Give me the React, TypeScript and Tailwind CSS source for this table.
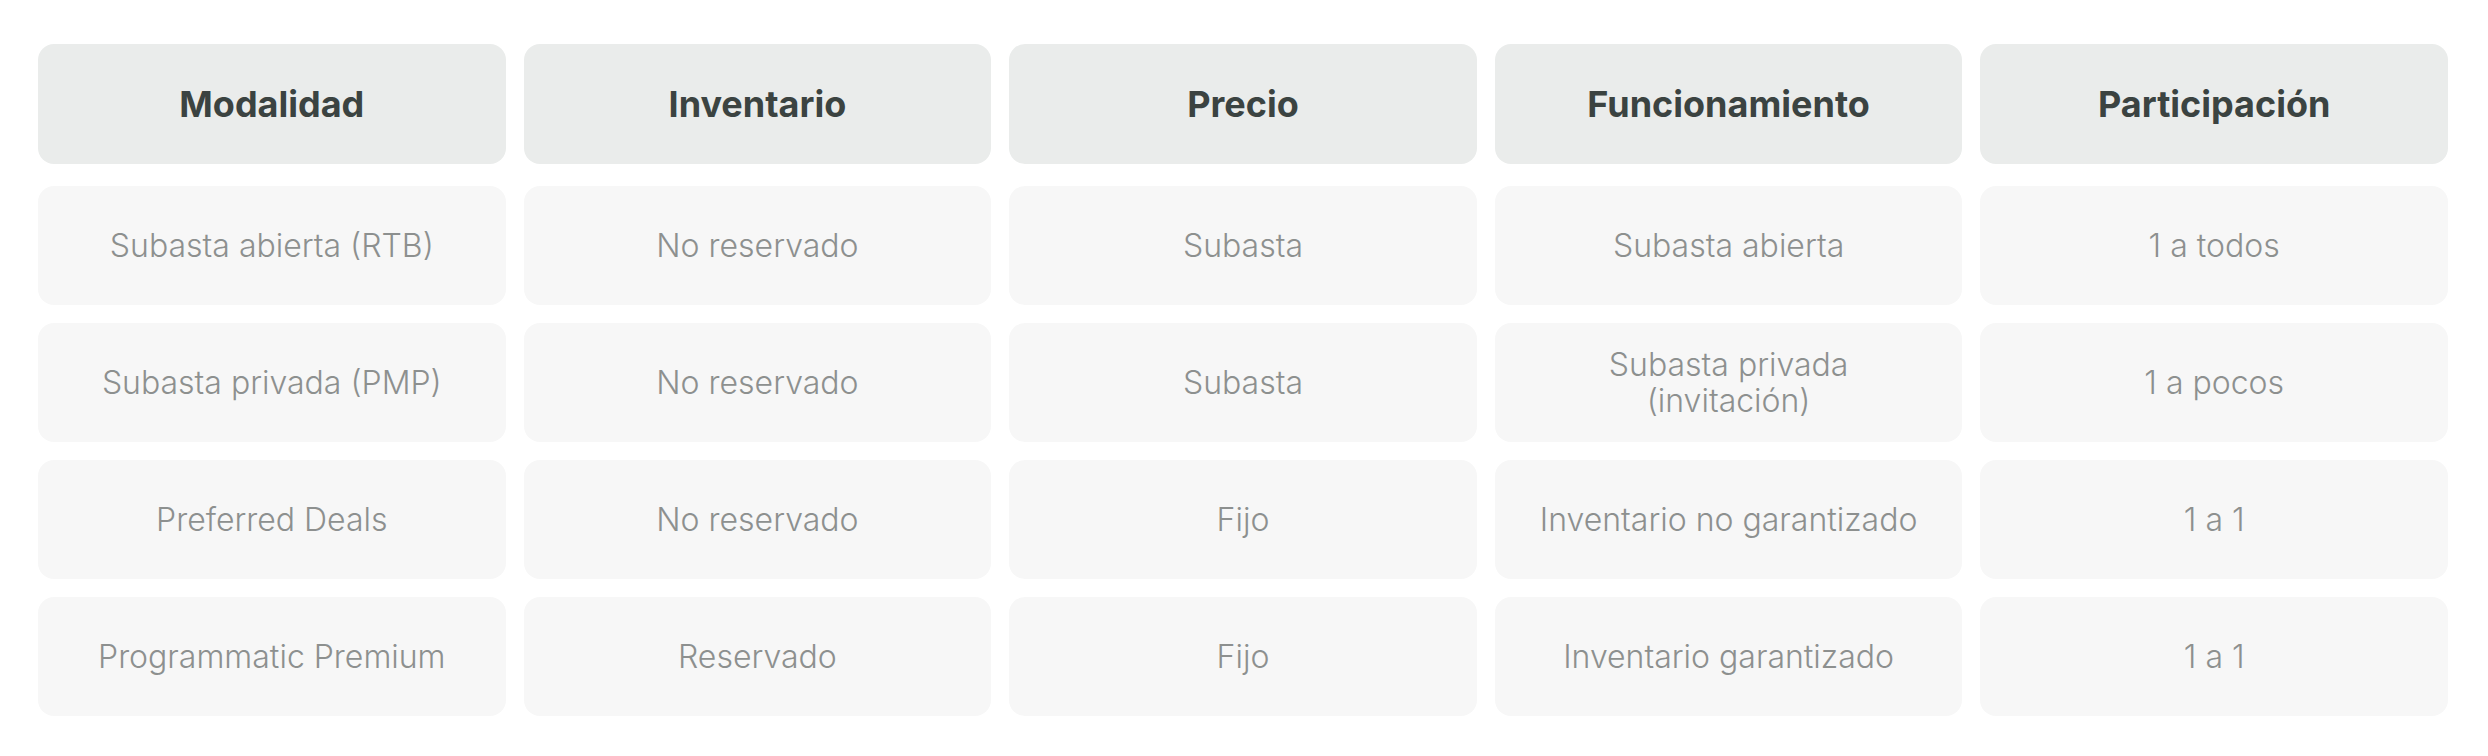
import React from 'react';

const headers = ['Modalidad', 'Inventario', 'Precio', 'Funcionamiento', 'Participación'];

const rows: string[][] = [
  ['Subasta abierta (RTB)', 'No reservado', 'Subasta', 'Subasta abierta', '1 a todos'],
  ['Subasta privada (PMP)', 'No reservado', 'Subasta', 'Subasta privada\n(invitación)', '1 a pocos'],
  ['Preferred Deals', 'No reservado', 'Fijo', 'Inventario no garantizado', '1 a 1'],
  ['Programmatic Premium', 'Reservado', 'Fijo', 'Inventario garantizado', '1 a 1'],
];

export default function App() {
  return (
    <div className="bg-white pl-[38px] pr-[40px] pt-[44px] pb-[38px] font-['Inter',sans-serif]">
      {/* Header */}
      <div className="grid grid-cols-5 gap-[18px] mb-[22px]">
        {headers.map((h) => (
          <div
            key={h}
            className="flex h-[120px] items-center justify-center rounded-[16px] bg-[#eaeceb] text-[36px] font-bold text-[#3b4341]"
          >
            {h}
          </div>
        ))}
      </div>

      {/* Rows */}
      <div className="flex flex-col gap-[18px]">
        {rows.map((row, i) => (
          <div key={i} className="grid grid-cols-5 gap-[18px]">
            {row.map((cell, j) => (
              <div
                key={j}
                className="flex h-[119px] items-center justify-center whitespace-pre-line rounded-[16px] bg-[#f7f7f7] text-center text-[32px] font-light leading-[36px] text-[#8d908f]"
              >
                {cell}
              </div>
            ))}
          </div>
        ))}
      </div>
    </div>
  );
}
